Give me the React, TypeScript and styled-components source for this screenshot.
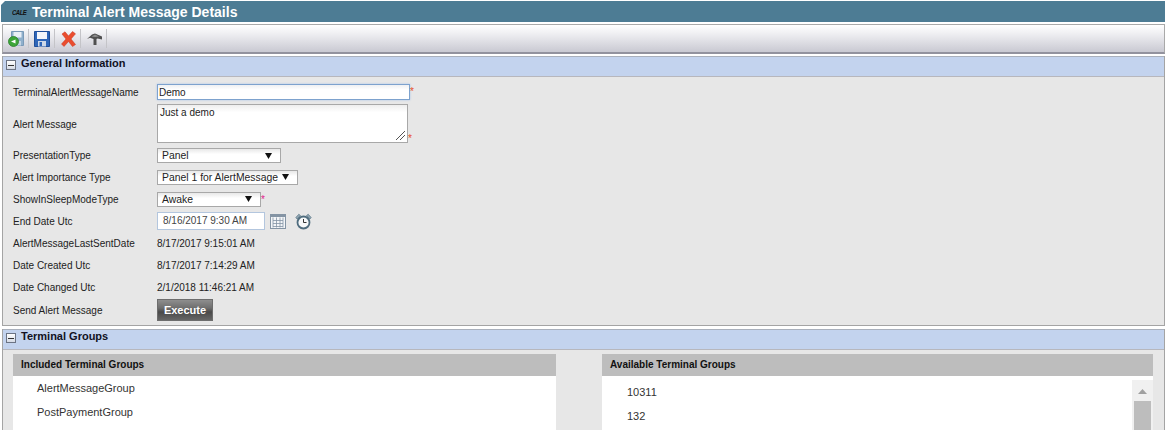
import React from "react";
import styled, { createGlobalStyle } from "styled-components";

const GlobalStyle = createGlobalStyle`
  html, body {
    margin: 0;
    padding: 0;
    height: 430px;
    overflow: hidden;
    background: #ffffff;
    font-family: "Liberation Sans", Arial, sans-serif;
    font-size: 10px;
    color: #222222;
  }
`;

const Page = styled.div`
  width: 1166px;
  height: 430px;
  overflow: hidden;
  display: flex;
  flex-direction: column;
`;

const TitleBar = styled.div`
  height: 21px;
  margin: 1px 1px 2px 1px;
  background: #4d7c94;
  display: flex;
  align-items: center;
  gap: 6px;
  padding-left: 10px;
  flex-shrink: 0;
  clip-path: polygon(4px 0, 100% 0, 100% 100%, 0 100%, 0 4px);
`;

const Logo = styled.span`
  font-family: "Liberation Sans", sans-serif;
  font-style: italic;
  font-weight: bold;
  font-size: 6px;
  letter-spacing: -0.5px;
  color: #111111;
  width: 15px;
  padding-left: 1px;
  box-sizing: border-box;
  white-space: nowrap;
  transform: scaleY(1.35);
`;

const Title = styled.h1`
  margin: 0;
  font-size: 14px;
  font-weight: bold;
  color: #ffffff;
`;

const Toolbar = styled.div`
  height: 27px;
  margin: 0 1px 2px 2px;
  border: 1px solid #a9a9a9;
  border-bottom: 2px solid #92929e;
  background: linear-gradient(#ffffff, #f0f0f3 30%, #c9c9d2);
  display: flex;
  align-items: center;
  padding-left: 3px;
  flex-shrink: 0;
`;

const ToolButton = styled.span`
  width: 20px;
  height: 20px;
  display: flex;
  align-items: center;
  justify-content: center;
`;

const ToolDivider = styled.span`
  width: 1px;
  height: 19px;
  margin: 0 3px 0 2px;
  background: #c4c4c8;
`;

const Section = styled.section<{ $height: number }>`
  height: ${(p) => p.$height}px;
  margin: 0 1px 3px 2px;
  border: 1px solid #a4a4a4;
  border-top: 0;
  background: #e7e7e7;
  box-sizing: border-box;
  flex-shrink: 0;
`;

const SectionHeader = styled.div`
  height: 21px;
  background: #c3d3ee;
  border-top: 1px solid #a9b0bc;
  border-bottom: 1px solid #b7b7bd;
  box-sizing: border-box;
  display: flex;
  align-items: flex-start;
  gap: 5px;
  padding: 0 0 0 3px;
  font-size: 11px;
  line-height: 12px;
  font-weight: bold;
  color: #111122;
`;

const Toggle = styled.span`
  width: 8px;
  height: 8px;
  margin-top: 3px;
  border: 1px solid #6c7484;
  background: linear-gradient(#ffffff, #d5dbe6);
  position: relative;
  flex-shrink: 0;
  &::after {
    content: "";
    position: absolute;
    left: 1px;
    right: 1px;
    top: 4px;
    height: 1px;
    background: #333333;
  }
`;

const Form = styled.div`
  padding: 4px 0 0 10px;
  display: flex;
  flex-direction: column;
`;

const Row = styled.div<{ $height: number }>`
  height: ${(p) => p.$height}px;
  display: grid;
  grid-template-columns: 144px 1fr;
  align-items: center;
`;

const Label = styled.span`
  color: #222222;
`;

const Field = styled.div`
  display: flex;
  align-items: center;
`;

const TextBox = styled.div`
  width: 250px;
  height: 14px;
  border: 1px solid #7da2ce;
  background: linear-gradient(#eef0f3, #ffffff 35%);
  box-shadow: 0 0 2px #a8c4ea;
  line-height: 15px;
  padding-left: 1px;
  color: #222222;
`;

const TextArea = styled.div`
  width: 247px;
  height: 35px;
  margin-top: -1px;
  border: 1px solid #a8a8a8;
  background: linear-gradient(#eeeeee, #ffffff 20%);
  padding: 2px 0 0 2px;
  position: relative;
`;

const Resize = styled.svg`
  position: absolute;
  right: 1px;
  bottom: 1px;
`;

const Required = styled.span<{ $low?: boolean; $pink?: boolean }>`
  color: ${(p) => (p.$pink ? "#e0208c" : "#e8502a")};
  align-self: ${(p) => (p.$low ? "flex-end" : "flex-start")};
  font-size: 10px;
  line-height: 10px;
  margin-top: ${(p) => (p.$low ? "0" : "3px")};
  margin-bottom: ${(p) => (p.$low ? "-1px" : "0")};
`;

const Select = styled.div<{ $width: number }>`
  width: ${(p) => p.$width}px;
  height: 13px;
  box-sizing: content-box;
  border: 1px solid #a8a8a8;
  background: linear-gradient(#e8e8e8, #ffffff 40%);
  display: flex;
  align-items: center;
  justify-content: space-between;
  padding-left: 4px;
  padding-right: 8px;
  font-size: 10.4px;
  white-space: nowrap;
`;

const CaretIcon = styled.svg`
  flex-shrink: 0;
`;

const DateInput = styled.div`
  width: 101px;
  height: 16px;
  line-height: 16px;
  border: 1px solid #b3c6de;
  background: #ffffff;
  padding-left: 5px;
  color: #444444;
`;

const IconSlot = styled.span<{ $gap: number }>`
  margin-left: ${(p) => p.$gap}px;
  display: flex;
`;

const ExecuteButton = styled.button`
  width: 56px;
  height: 22px;
  padding: 0;
  border: 1px solid #6d6d6d;
  background: linear-gradient(#8e8e8e, #6e6e6e 40%, #4a4a4a 60%, #666666);
  color: #ffffff;
  font: bold 11px "Liberation Sans", Arial, sans-serif;
`;

const Columns = styled.div`
  display: grid;
  grid-template-columns: 543px 551px;
  column-gap: 46px;
  padding: 4px 0 0 10px;
`;

const ColumnHead = styled.div`
  height: 22px;
  line-height: 22px;
  background: #bdbdbd;
  padding-left: 8px;
  font-weight: bold;
  font-size: 10px;
  color: #111111;
`;

const List = styled.div<{ $top: number }>`
  height: 60px;
  background: #ffffff;
  padding-top: ${(p) => p.$top}px;
  position: relative;
`;

const ListItem = styled.div<{ $indent: number }>`
  height: 24px;
  line-height: 24px;
  font-size: 11px;
  padding-left: ${(p) => p.$indent}px;
  color: #333333;
`;

const ScrollBar = styled.div`
  position: absolute;
  top: 4px;
  right: 0;
  width: 21px;
  height: 60px;
  background: #f0f0f0;
  display: flex;
  flex-direction: column;
  align-items: center;
`;

const ScrollArrow = styled.svg`
  margin-top: 9px;
`;

const ScrollThumb = styled.div`
  width: 17px;
  flex: 1;
  margin-top: 7px;
  background: #bdbdbd;
`;

const Caret = () => (
  <CaretIcon width="7" height="6" viewBox="0 0 7 6">
    <path d="M0 0h7L3.500 6z" fill="#111111" />
  </CaretIcon>
);

const BackIcon = () => (
  <svg width="16" height="16" viewBox="0 0 16 16">
    <path d="M3.500 0.500h12v14h-12z" fill="#8fb0cc" stroke="#7a9ab8" />
    <path d="M5.500 1h8v5.500h-8z" fill="#e9eff6" />
    <path d="M7 10h6v4.500H7z" fill="#c5d5e4" />
    <circle cx="5.500" cy="10.500" r="5" fill="#3da63a" stroke="#2b7d2b" strokeWidth="0.8" />
    <path d="M7.500 8.500v4L3 10.500z" fill="#ffffff" />
  </svg>
);

const SaveIcon = () => (
  <svg width="16" height="16" viewBox="0 0 16 16">
    <path d="M0.500 0.500h15v15h-15z" fill="#2f66b8" stroke="#1f4f9a" />
    <path d="M3 1h10v7H3z" fill="#f4f6fa" />
    <path d="M4 10h8v5.500H4z" fill="#cfd9e8" />
    <path d="M5.500 11h2.500v4H5.500z" fill="#2f66b8" />
  </svg>
);

const DeleteIcon = () => (
  <svg width="15" height="16" viewBox="0 0 15 16">
    <path d="M1 3L4 0.800 7.500 5 11.500 0.500 14.500 2.800 10 8l4.500 5.500L11.500 15.500 7.500 10.500 3 15.500 0.500 13 5 8z" fill="#ea4d2e" stroke="#c8321c" strokeWidth="0.5" />
  </svg>
);

const HammerIcon = () => (
  <svg width="15" height="12" viewBox="0 0 15 12">
    <path d="M0 6L5 1.500 8 0.500 15 3.500V6.500L10.500 5.500 9.500 6V12H6.500V6L3 4.800z" fill="#505050" />
    <path d="M4.500 3.500L8 1.500 12 3.500 8 4z" fill="#8e8e8e" />
  </svg>
);

const CalendarIcon = () => (
  <svg width="16" height="15" viewBox="0 0 16 15" fill="none" stroke="#8494a4">
    <rect x="0.500" y="0.500" width="15" height="14" fill="#f4f6f8" />
    <rect x="1" y="1" width="14" height="2" fill="#8494a4" stroke="none" />
    <path d="M3 6.500h10M3 9.500h10M3 12.500h10M3 3.500v10M6.500 3.500v10M10 3.500v10M13 3.500v10" strokeWidth="0.8" />
  </svg>
);

const ClockIcon = () => (
  <svg width="17" height="17" viewBox="0 0 17 17" fill="none" stroke="#4f6c7e">
    <path d="M0.800 4.500L3.800 1.200 5.500 2.500 2 6zM16.200 4.500L13.200 1.200 11.500 2.500 15 6z" fill="#8fa5b2" strokeWidth="0.6" />
    <circle cx="8.500" cy="9.500" r="6" strokeWidth="1.800" fill="#f6f8f9" />
    <path d="M8.500 6v3.500h3" strokeWidth="1" stroke="#333333" />
  </svg>
);

const App = () => {
  return (
    <Page>
      <GlobalStyle />
      <TitleBar>
        <Logo>CALE</Logo>
        <Title>Terminal Alert Message Details</Title>
      </TitleBar>
      <Toolbar>
        <ToolButton><BackIcon /></ToolButton>
        <ToolDivider />
        <ToolButton><SaveIcon /></ToolButton>
        <ToolDivider />
        <ToolButton><DeleteIcon /></ToolButton>
        <ToolDivider />
        <ToolButton><HammerIcon /></ToolButton>
        <ToolDivider />
      </Toolbar>
      <Section $height={270}>
        <SectionHeader>
          <Toggle />
          General Information
        </SectionHeader>
        <Form>
          <Row $height={22}>
            <Label>TerminalAlertMessageName</Label>
            <Field>
              <TextBox>Demo</TextBox>
              <Required>*</Required>
            </Field>
          </Row>
          <Row $height={42}>
            <Label>Alert Message</Label>
            <Field>
              <TextArea>
                Just a demo
                <Resize width="11" height="11" viewBox="0 0 11 11" stroke="#555555" fill="none">
                  <path d="M1 10L10 1M5 10L10 5" />
                </Resize>
              </TextArea>
              <Required $low>*</Required>
            </Field>
          </Row>
          <Row $height={21}>
            <Label>PresentationType</Label>
            <Field>
              <Select $width={110}>Panel<Caret /></Select>
            </Field>
          </Row>
          <Row $height={22}>
            <Label>Alert Importance Type</Label>
            <Field>
              <Select $width={127}>Panel 1 for AlertMessage<Caret /></Select>
            </Field>
          </Row>
          <Row $height={22}>
            <Label>ShowInSleepModeType</Label>
            <Field>
              <Select $width={90}>Awake<Caret /></Select>
              <Required $pink>*</Required>
            </Field>
          </Row>
          <Row $height={22}>
            <Label>End Date Utc</Label>
            <Field>
              <DateInput>8/16/2017 9:30 AM</DateInput>
              <IconSlot $gap={5}><CalendarIcon /></IconSlot>
              <IconSlot $gap={9}><ClockIcon /></IconSlot>
            </Field>
          </Row>
          <Row $height={22}>
            <Label>AlertMessageLastSentDate</Label>
            <Field>8/17/2017 9:15:01 AM</Field>
          </Row>
          <Row $height={22}>
            <Label>Date Created Utc</Label>
            <Field>8/17/2017 7:14:29 AM</Field>
          </Row>
          <Row $height={22}>
            <Label>Date Changed Utc</Label>
            <Field>2/1/2018 11:46:21 AM</Field>
          </Row>
          <Row $height={24}>
            <Label>Send Alert Message</Label>
            <Field>
              <ExecuteButton>Execute</ExecuteButton>
            </Field>
          </Row>
        </Form>
      </Section>
      <Section $height={102}>
        <SectionHeader>
          <Toggle />
          Terminal Groups
        </SectionHeader>
        <Columns>
          <div>
            <ColumnHead>Included Terminal Groups</ColumnHead>
            <List $top={0}>
              <ListItem $indent={24}>AlertMessageGroup</ListItem>
              <ListItem $indent={24}>PostPaymentGroup</ListItem>
            </List>
          </div>
          <div>
            <ColumnHead>Available Terminal Groups</ColumnHead>
            <List $top={4}>
              <ListItem $indent={25}>10311</ListItem>
              <ListItem $indent={25}>132</ListItem>
              <ScrollBar>
                <ScrollArrow width="9" height="5" viewBox="0 0 9 5">
                  <path d="M4.500 0L9 5H0z" fill="#a0a0a0" />
                </ScrollArrow>
                <ScrollThumb />
              </ScrollBar>
            </List>
          </div>
        </Columns>
      </Section>
    </Page>
  );
};

export default App;
